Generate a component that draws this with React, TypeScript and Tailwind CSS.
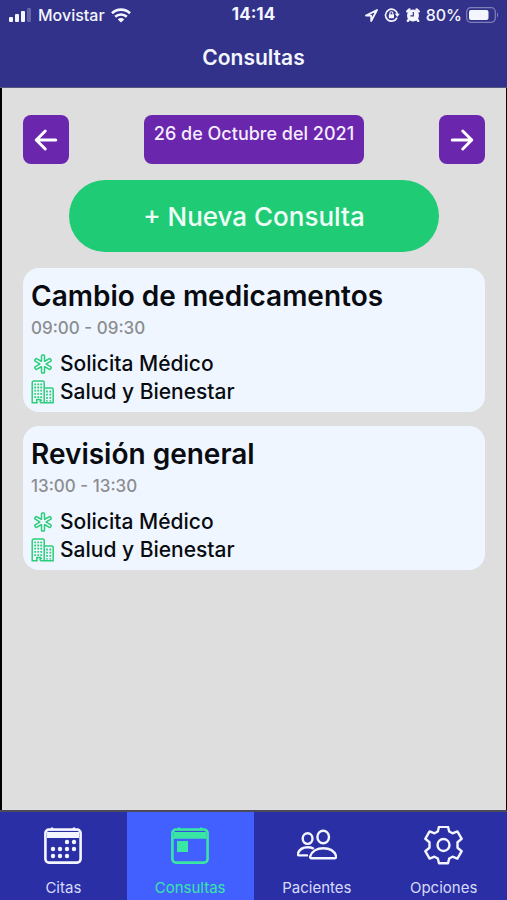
import type { ReactNode } from "react";
import { IoArrowBack, IoArrowForward, IoMedicalOutline } from "react-icons/io5";

function SignalIcon() {
  return (
    <svg width="24" height="14" viewBox="0 0 24 14" fill="currentColor" aria-hidden="true">
      <rect x="1" y="9" width="4" height="5" rx="1" />
      <rect x="7" y="6" width="4" height="8" rx="1" />
      <rect x="13" y="3" width="4" height="11" rx="1" />
      <rect x="19" y="0" width="4" height="14" rx="1" opacity="0.25" />
    </svg>
  );
}

function WifiIcon() {
  return (
    <svg width="20" height="15" viewBox="0 0 20 15" fill="none" stroke="currentColor" strokeWidth="2.6" aria-hidden="true">
      <path d="M1 5.2a13 13 0 0 1 18 0" />
      <path d="M4.2 8.8a8.4 8.4 0 0 1 11.6 0" />
      <path d="M10 14.6 6.8 11.4a4.6 4.6 0 0 1 6.4 0Z" fill="currentColor" stroke="none" />
    </svg>
  );
}

function LocationIcon() {
  return (
    <svg width="13" height="13" viewBox="0 0 13 13" fill="none" stroke="currentColor" strokeWidth="1.8" strokeLinejoin="round" aria-hidden="true">
      <path d="M12 1 1 6.6h5.2V12Z" />
    </svg>
  );
}

function RotationLockIcon() {
  return (
    <svg width="16" height="14" viewBox="0 0 16 14" fill="none" stroke="currentColor" strokeWidth="1.7" aria-hidden="true">
      <path d="M13 9.6A6 6 0 1 1 13.4 6" />
      <path d="M10.8 5.8h5L13.3 9Z" fill="currentColor" stroke="none" />
      <rect x="4.8" y="6.2" width="5.2" height="4" rx="0.6" fill="currentColor" stroke="none" />
      <path d="M5.9 6.4V5.2a1.5 1.5 0 0 1 3 0v1.2" strokeWidth="1.1" />
    </svg>
  );
}

function AlarmIcon() {
  return (
    <svg width="14" height="14" viewBox="0 0 14 14" aria-hidden="true">
      <circle cx="7" cy="7.4" r="6" fill="currentColor" />
      <path d="M1.3 3.4 3.4 1.4M12.7 3.4 10.6 1.4M2.8 11.6 1.8 12.9M11.2 11.6l1 1.3" stroke="currentColor" strokeWidth="2.4" strokeLinecap="round" />
      <path d="M7.3 4v3.9H4.4" fill="none" stroke="#33328a" strokeWidth="1.2" />
    </svg>
  );
}

function BatteryIcon() {
  return (
    <svg width="33" height="16" viewBox="0 0 33 16" fill="none" aria-hidden="true">
      <rect x="0.7" y="0.7" width="28.6" height="14.6" rx="4" stroke="currentColor" strokeWidth="1.2" opacity="0.4" />
      <rect x="3" y="3" width="19.5" height="10" rx="2" fill="currentColor" />
      <path d="M31 5.6c1.6.8 1.6 4 0 4.8Z" fill="currentColor" opacity="0.4" />
    </svg>
  );
}

function BuildingIcon() {
  return (
    <svg width="24" height="24" viewBox="0 0 24 24" fill="none" stroke="currentColor" strokeWidth="1.5" aria-hidden="true">
      <path d="M1.2 22.5V2.6A1.6 1.6 0 0 1 2.8 1h8.8a1.6 1.6 0 0 1 1.6 1.6v19.9M13.2 8h7.4a1.6 1.6 0 0 1 1.6 1.6v12.9M.5 22.7h6.2M9.2 22.7h13.7M5.8 22.5v-3h3.4v3" />
      <path d="M4.2 3.4v15.5M7.2 3.4v15M10.2 3.4v18" strokeWidth="1.8" strokeDasharray="1.8 1.4" />
      <path d="M16 10.6v11M19.3 10.6v11" strokeWidth="1.8" strokeDasharray="1.8 1.4" />
    </svg>
  );
}

function CalendarIcon({ today = false }: { today?: boolean }) {
  const dots = [
    [24, 16], [31, 16],
    [10, 23], [17, 23], [24, 23], [31, 23],
    [10, 30], [17, 30], [24, 30],
  ];
  return (
    <svg width="40" height="40" viewBox="0 0 40 40" fill="none" stroke="currentColor" strokeWidth="2.6" aria-hidden="true">
      <rect x="2.4" y="3.6" width="35.2" height="33" rx="3.5" />
      <path d="M9 3.5V2.8M31 3.5V2.8" strokeWidth="3" strokeLinecap="round" />
      <path d="M4 6h32v6H4Z" fill="currentColor" stroke="none" />
      <path d="M5 5.3h30" opacity="0.45" stroke="#2b2fa5" strokeWidth="1" />
      {today ? (
        <>
          <path d="M3 11.8h34" strokeWidth="2" />
          <rect x="7" y="15" width="11" height="11" fill="currentColor" stroke="none" />
        </>
      ) : (
        dots.map(([x, y]) => (
          <circle key={`${x}-${y}`} cx={x} cy={y} r="2.2" fill="currentColor" stroke="none" />
        ))
      )}
    </svg>
  );
}

function PeopleIcon() {
  return (
    <svg width="40" height="40" viewBox="0 0 40 40" fill="none" stroke="currentColor" strokeWidth="2.4" strokeLinejoin="round" strokeLinecap="round" aria-hidden="true">
      <ellipse cx="26.2" cy="11" rx="5.8" ry="6.3" />
      <ellipse cx="10.6" cy="12.6" rx="4.9" ry="5.3" />
      <path d="M14.5 32.2h23.3c1.200 0 1.700-.9 1.300-2-1.600-5.200-6.800-8-12.800-8s-11.400 2.800-13 8c-.4 1.100 0 2 1.200 2Z" />
      <path d="M10 29.400H1.700c-.8 0-1.200-.6-.9-1.500 1.400-4.400 5.500-6.600 10-6.600 1.900 0 3.700.3 5.200 1" />
    </svg>
  );
}

function GearIcon() {
  return (
    <svg width="40" height="40" viewBox="0 0 40 40" fill="none" stroke="currentColor" strokeWidth="2.4" strokeLinejoin="round" aria-hidden="true">
      <g transform="translate(19.500 19)">
        <circle r="6" />
        <path d="M-4.500-18.300h9L5.700-13.500 9-11.700l4.900-1.900L18.200-6.200l-4.200 3.400v5.600l4.200 3.400-4.300 7.400L9 11.700l-3.300 1.800L4.500 18.300h-9l-1.200-4.800L-9 11.700l-4.900 1.900L-18.200 6.200l4.200-3.400v-5.600l-4.200-3.400 4.300-7.400L-9-11.700l3.300-1.800Z" />
      </g>
    </svg>
  );
}

function ConsultaCard({ title, time }: { title: string; time: string }) {
  return (
    <article className="rounded-2xl bg-[#f0f6ff] px-2 pt-3 pb-[6px] text-[#080b10]">
      <h2 className="text-[28px] leading-8 font-semibold">{title}</h2>
      <p className="mt-1 text-[17px] leading-6 font-medium text-[#8b8d91]">{time}</p>
      <ul className="mt-[10px] text-[21px] leading-7 font-medium">
        <li className="flex items-center gap-[5px]">
          <span className="flex w-6 justify-center text-[#2bce7b]"><IoMedicalOutline size={24} /></span>
          Solicita Médico
        </li>
        <li className="flex items-center gap-[5px]">
          <span className="text-[#2bce7b]"><BuildingIcon /></span>
          Salud y Bienestar
        </li>
      </ul>
    </article>
  );
}

function Tab({ label, active = false, children }: { label: string; active?: boolean; children: ReactNode }) {
  return (
    <button
      type="button"
      aria-current={active ? "page" : undefined}
      className={`flex flex-1 basis-0 flex-col items-center justify-between pt-[14px] pb-1 text-[15px] leading-4 ${
        active ? "bg-[#4160ff] text-[#39e6a3]" : "text-[#f3f5ff]"
      }`}
    >
      {children}
      <span className={active ? "" : "text-[#d7dbfa]"}>{label}</span>
    </button>
  );
}

export default function App() {
  return (
    <div className="flex min-h-screen flex-col bg-[#dedede] font-['Inter','Liberation_Sans',sans-serif]">
      <header className="h-[88px] border-b border-[#55557d] bg-[#33328a] text-[#f4f6ff]">
        <div className="grid h-[30px] grid-cols-[1fr_auto_1fr] items-center px-2 text-base font-medium">
          <div className="flex items-center gap-[6px]">
            <SignalIcon />
            <span>Movistar</span>
            <WifiIcon />
          </div>
          <span className="text-[17px] font-bold">14:14</span>
          <div className="flex items-center justify-end gap-[6px]">
            <LocationIcon />
            <RotationLockIcon />
            <AlarmIcon />
            <div className="flex items-center gap-1">
              <span>80%</span>
              <BatteryIcon />
            </div>
          </div>
        </div>
        <h1 className="pt-3 text-center text-[21px] leading-8 font-semibold">Consultas</h1>
      </header>

      <main className="flex-1 border-r border-l-2 border-black px-[21px] pt-[27px]">
        <div className="flex items-start justify-between">
          <button type="button" aria-label="Día anterior" className="flex h-[49px] w-[46px] items-center justify-center rounded-lg bg-[#6a26ac] text-white">
            <IoArrowBack size={32} />
          </button>
          <button type="button" className="flex h-[49px] w-[220px] justify-center rounded-lg bg-[#6a26ac] pt-[5px] text-lg leading-7 font-medium whitespace-nowrap text-[#f5edff]">
            26 de Octubre del 2021
          </button>
          <button type="button" aria-label="Día siguiente" className="flex h-[49px] w-[46px] items-center justify-center rounded-lg bg-[#6a26ac] text-white">
            <IoArrowForward size={32} />
          </button>
        </div>
        <button type="button" className="mx-auto mt-4 block h-[72px] w-4/5 rounded-full bg-[#20cb76] text-[26px] font-medium text-[#f0fff7]">
          + Nueva Consulta
        </button>
        <div className="mt-4 flex flex-col gap-[14px]">
          <ConsultaCard title="Cambio de medicamentos" time="09:00 - 09:30" />
          <ConsultaCard title="Revisión general" time="13:00 - 13:30" />
        </div>
      </main>

      <nav aria-label="Principal" className="flex h-[90px] border-t-2 border-[#4a4a58] bg-[#2b2fa5]">
        <Tab label="Citas"><CalendarIcon /></Tab>
        <Tab label="Consultas" active><CalendarIcon today /></Tab>
        <Tab label="Pacientes"><PeopleIcon /></Tab>
        <Tab label="Opciones"><GearIcon /></Tab>
      </nav>
    </div>
  );
}
